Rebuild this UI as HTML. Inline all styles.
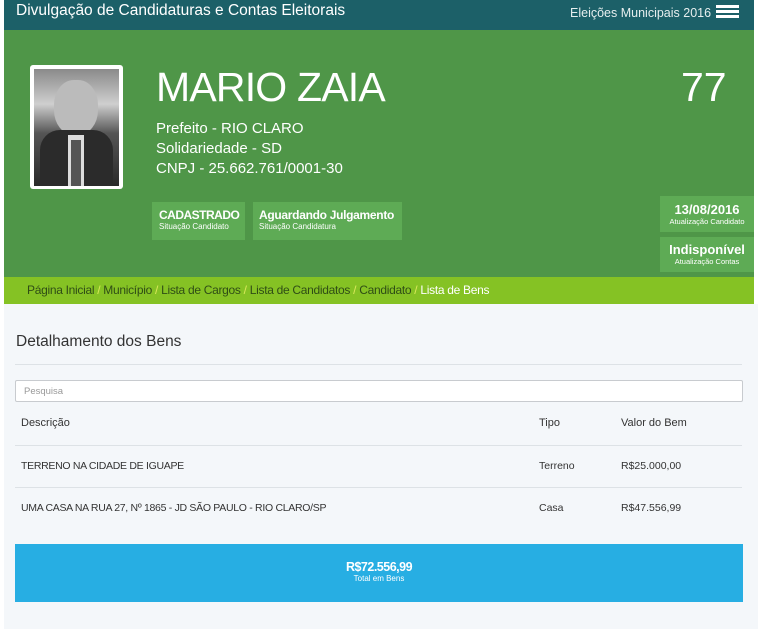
<!DOCTYPE html>
<html><head><meta charset="utf-8"><style>
*{margin:0;padding:0;box-sizing:border-box}
body{width:762px;height:629px;background:#fff;font-family:"Liberation Sans",sans-serif;position:relative;overflow:hidden}
.a{position:absolute}
</style></head><body>
<div class="a" style="left:4px;top:0;width:750px;height:30px;background:#1c6068"></div>
<div class="a" style="left:16px;top:2px;color:#fff;font-size:15.5px">Divulgação de Candidaturas e Contas Eleitorais</div>
<div class="a" style="left:570px;top:6px;color:#e6eeee;font-size:12.5px">Eleições Municipais 2016</div>
<div class="a" style="left:716px;top:5px;width:23px;height:2.5px;background:#fff;box-shadow:0 5px 0 #fff,0 10px 0 #fff"></div>
<div class="a" style="left:4px;top:30px;width:750px;height:247px;background:#4f9648"></div>
<div class="a" style="left:30px;top:65px;width:93px;height:124px;background:#fff;border-radius:3px"></div>
<div class="a" style="left:34px;top:69px;width:85px;height:117px;background:linear-gradient(#8a8a8a,#cfcfcf 30%,#555 55%,#2a2a2a)"></div>
<div class="a" style="left:54px;top:80px;width:44px;height:55px;border-radius:45%;background:#bbb"></div>
<div class="a" style="left:40px;top:130px;width:73px;height:56px;background:#2b2b2b;border-radius:20px 20px 0 0"></div>
<div class="a" style="left:68px;top:135px;width:16px;height:51px;background:#ddd"></div>
<div class="a" style="left:71px;top:140px;width:10px;height:46px;background:#555"></div>
<div class="a" style="left:156px;top:64px;color:#fff;font-size:41px;letter-spacing:-0.8px">MARIO ZAIA</div>
<div class="a" style="left:681px;top:64px;color:#fff;font-size:41px">77</div>
<div class="a" style="left:156px;top:119px;color:#fff;font-size:15px;line-height:20px">Prefeito - RIO CLARO<br>Solidariedade - SD<br>CNPJ - 25.662.761/0001-30</div>
<div class="a" style="left:152px;top:202px;width:93px;height:38px;background:#5eab55;color:#fff;padding:6px 0 0 7px"><div style="font-size:12px;font-weight:bold;letter-spacing:-0.5px">CADASTRADO</div><div style="font-size:8px">Situação Candidato</div></div>
<div class="a" style="left:253px;top:202px;width:149px;height:38px;background:#5eab55;color:#fff;padding:6px 0 0 6px"><div style="font-size:12px;font-weight:bold;letter-spacing:-0.3px">Aguardando Julgamento</div><div style="font-size:8px">Situação Candidatura</div></div>
<div class="a" style="left:660px;top:196px;width:94px;height:36px;background:#5eab55;color:#fff;text-align:center;padding-top:6px"><div style="font-size:13px;font-weight:bold">13/08/2016</div><div style="font-size:7.5px">Atualização Candidato</div></div>
<div class="a" style="left:660px;top:237px;width:94px;height:35px;background:#5eab55;color:#fff;text-align:center;padding-top:5px"><div style="font-size:13px;font-weight:bold">Indisponível</div><div style="font-size:7.5px">Atualização Contas</div></div>
<div class="a" style="left:4px;top:277px;width:750px;height:27px;background:#85c224"></div>
<div class="a" style="left:27px;top:283px;font-size:12px;color:#2f4d16;white-space:nowrap;letter-spacing:-0.3px">Página Inicial <span style="color:#d9e85a">/</span> Município <span style="color:#d9e85a">/</span> Lista de Cargos <span style="color:#d9e85a">/</span> Lista de Candidatos <span style="color:#d9e85a">/</span> Candidato <span style="color:#d9e85a">/</span> <span style="color:#fff">Lista de Bens</span></div>
<div class="a" style="left:4px;top:304px;width:754px;height:325px;background:#f4f7fa"></div>
<div class="a" style="left:16px;top:333px;font-size:15.5px;color:#333">Detalhamento dos Bens</div>
<div class="a" style="left:15px;top:364px;width:727px;height:1px;background:#dde2e6"></div>
<div class="a" style="left:15px;top:380px;width:728px;height:22px;background:#fff;border:1px solid #c8cbcf;border-radius:2px;font-size:9.5px;color:#999;padding:5px 0 0 8px">Pesquisa</div>
<div class="a" style="left:21px;top:417px;font-size:11px;color:#333">Descrição</div>
<div class="a" style="left:539px;top:417px;font-size:11px;color:#333">Tipo</div>
<div class="a" style="left:621px;top:417px;font-size:11px;color:#333">Valor do Bem</div>
<div class="a" style="left:15px;top:445px;width:727px;height:1px;background:#dde2e6"></div>
<div class="a" style="left:21px;top:460px;font-size:10.5px;color:#333;letter-spacing:-0.3px">TERRENO NA CIDADE DE IGUAPE</div>
<div class="a" style="left:539px;top:460px;font-size:10.5px;color:#333">Terreno</div>
<div class="a" style="left:621px;top:460px;font-size:10.5px;color:#333">R$25.000,00</div>
<div class="a" style="left:15px;top:487px;width:727px;height:1px;background:#dde2e6"></div>
<div class="a" style="left:21px;top:502px;font-size:10.5px;color:#333;letter-spacing:-0.3px">UMA CASA NA RUA 27, Nº 1865 - JD SÃO PAULO - RIO CLARO/SP</div>
<div class="a" style="left:539px;top:502px;font-size:10.5px;color:#333">Casa</div>
<div class="a" style="left:621px;top:502px;font-size:10.5px;color:#333">R$47.556,99</div>
<div class="a" style="left:15px;top:544px;width:728px;height:58px;background:#27aee3;color:#fff;text-align:center;padding-top:16px"><div style="font-size:12.5px;font-weight:bold;letter-spacing:-0.5px">R$72.556,99</div><div style="font-size:8px">Total em Bens</div></div>
</body></html>
